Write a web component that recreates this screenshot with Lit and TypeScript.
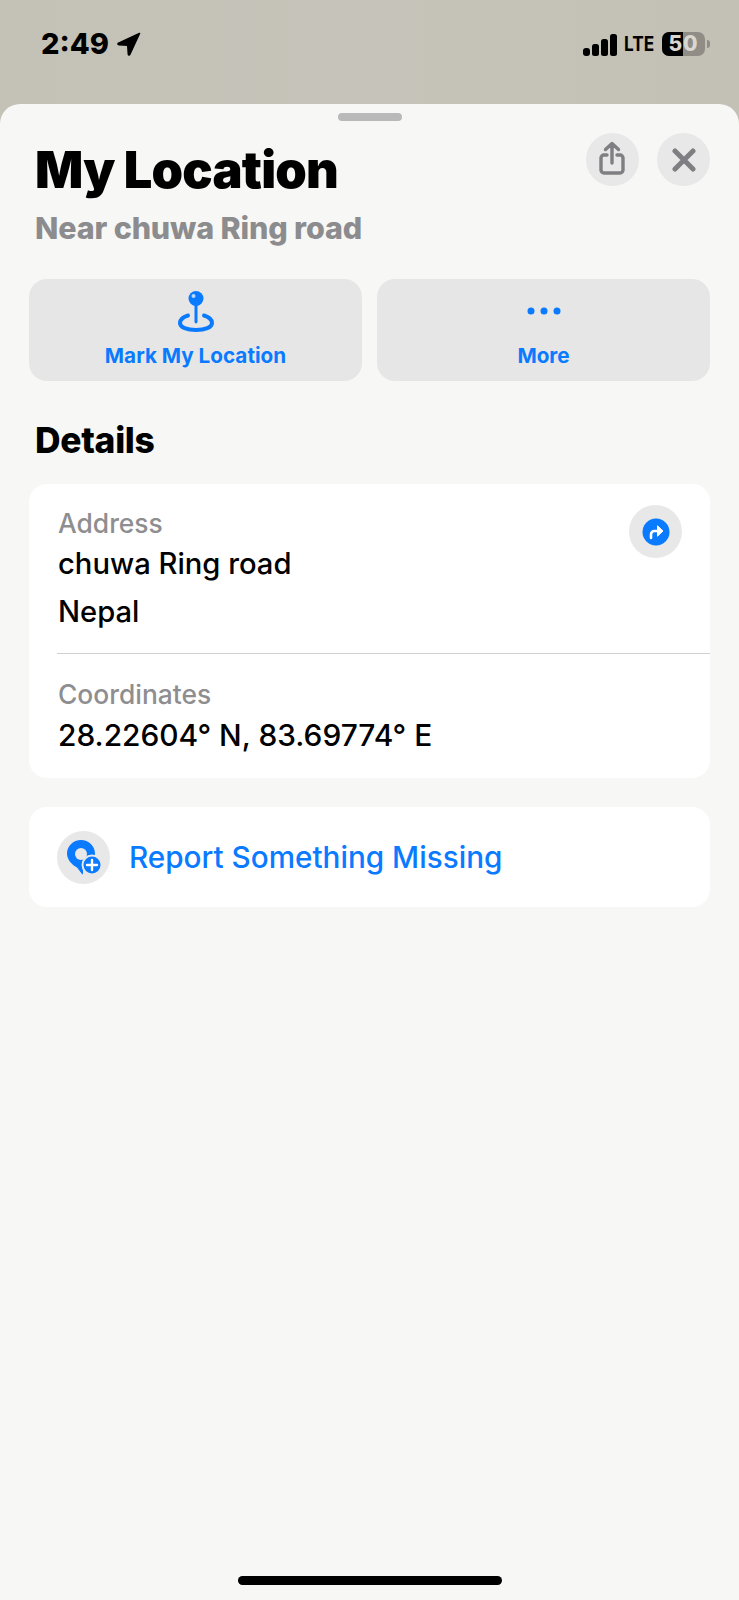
import { html, LitElement, css } from 'lit';
import { customElement } from 'lit/decorators.js';

@customElement('app-root')
export default class AppRoot extends LitElement {
  static styles = css`
    :host {
      display: block;
      width: 739px;
      height: 1600px;
      overflow: hidden;
      background: linear-gradient(90deg, #c4c1b7, #c6c3ba 50%, #c3c0b5);
      font-family: Inter, "Liberation Sans", sans-serif;
      color: #000;
    }
    .status {
      height: 104px;
      box-sizing: border-box;
      padding: 28px 29px 0 41px;
      display: flex;
      justify-content: space-between;
      align-items: flex-start;
    }
    .time {
      display: flex;
      align-items: center;
      gap: 8px;
      font-size: 29px;
      font-weight: 800;
      line-height: 32px;
    }
    .time svg { display: block; }
    .right {
      display: flex;
      align-items: center;
      gap: 5px;
      height: 32px;
    }
    .bars { margin: 2px 2px 0 0; }
    .lte {
      font-size: 20px;
      font-weight: 700;
      line-height: 24px;
      transform: scaleX(0.86);
      transform-origin: left center;
      width: 33px;
    }
    .batt {
      position: relative;
      width: 43px;
      height: 24px;
      border-radius: 7px;
      overflow: hidden;
      background: #8f8d86;
      font-size: 21px;
      font-weight: 800;
      line-height: 24px;
      text-align: center;
      color: #d9d7d0;
      letter-spacing: 1px;
    }
    .batt i {
      position: absolute;
      left: 0;
      top: 0;
      bottom: 0;
      width: 21px;
      background: #000;
    }
    .batt span { position: relative; }
    .nub {
      width: 3px;
      height: 8px;
      margin-left: -3px;
      background: #8f8d86;
      border-radius: 0 3px 3px 0;
    }
    .sheet {
      height: 1496px;
      box-sizing: border-box;
      background: #f7f7f5;
      border-radius: 20px 20px 0 0;
      padding: 9px 29px 0;
      display: flex;
      flex-direction: column;
      position: relative;
    }
    .handle {
      width: 64px;
      height: 8px;
      border-radius: 4px;
      background: #b9b9b9;
      align-self: center;
    }
    .head {
      display: flex;
      justify-content: space-between;
      align-items: flex-start;
      padding: 0 0 0 6px;
      margin-top: 9px;
    }
    .titles { padding-top: 11px; }
    h1 {
      margin: 0;
      font-size: 50.5px;
      line-height: 58px;
      font-weight: 900;
      letter-spacing: -0.8px;
    }
    .sub {
      margin-top: 11px;
      font-size: 30.5px;
      line-height: 36px;
      font-weight: 800;
      color: #8c8c8e;
      letter-spacing: -0.15px;
    }
    .head-btns {
      display: flex;
      gap: 18px;
      margin-top: 3px;
    }
    .round {
      width: 53px;
      height: 53px;
      border-radius: 50%;
      background: #e8e8e8;
      display: flex;
      align-items: center;
      justify-content: center;
    }
    .share svg { margin: -2px 2px 0 0; }
    .actions {
      display: grid;
      grid-template-columns: 333px 333px;
      gap: 15px;
      margin-top: 33px;
    }
    .action {
      height: 102px;
      border-radius: 18px;
      background: #e6e6e6;
      display: flex;
      flex-direction: column;
      align-items: center;
      color: #0a7aff;
      font-size: 20.7px;
      font-weight: 700;
    }
    .action .ic {
      height: 44px;
      margin-top: 10px;
      display: flex;
      align-items: center;
    }
    .action .lbl { margin-top: 11px; line-height: 24px; }
    h2 {
      margin: 40px 0 0 6px;
      font-size: 35.4px;
      line-height: 40px;
      font-weight: 800;
      letter-spacing: -0.3px;
    }
    .card {
      background: #fff;
      border-radius: 18px;
      margin-top: 23px;
    }
    .row {
      padding: 0 0 0 29px;
      position: relative;
      box-sizing: border-box;
    }
    .row.addr { padding-top: 23px; height: 169px; }
    .row.coord { padding-top: 23px; height: 124px; }
    .label {
      font-size: 26.4px;
      line-height: 33px;
      color: #8e8e90;
      font-weight: 500;
    }
    .coord .label { line-height: 34px; }
    .val {
      font-size: 29.2px;
      line-height: 47px;
      font-weight: 550;
    }
    .val + .val { margin-top: 1px; }
    .coord .val { font-size: 29.9px; line-height: 48px; }
    .go {
      position: absolute;
      right: 28px;
      top: 21px;
    }
    .sep { height: 1px; background: #d0d0d0; margin-left: 28px; }
    .report {
      display: flex;
      align-items: center;
      gap: 18px;
      height: 100px;
      margin-top: 29px;
      padding-left: 28px;
      color: #0a7aff;
      font-size: 29.7px;
      font-weight: 500;
    }
    .report .txt { margin-left: 1px; }
    .home {
      position: absolute;
      left: 238px;
      top: 1472px;
      width: 264px;
      height: 9px;
      border-radius: 5px;
      background: #000;
    }
  `;

  render() {
    return html`
      <div class="status">
        <div class="time">2:49
          <svg width="24" height="24" viewBox="0 0 24 24"><path d="M22.5 1.5 1.5 11.2c-.9.5-.6 1.500.3 1.500l8.900.6.6 8.900c0 .9 1.100 1.200 1.500.3z" fill="#000" stroke="#000" stroke-width="1.500" stroke-linejoin="round"/></svg>
        </div>
        <div class="right">
          <svg class="bars" width="34" height="22" viewBox="0 0 34 22" fill="#000"><rect x="0" y="14" width="7" height="8" rx="3"/><rect x="9" y="10" width="7" height="12" rx="2.5"/><rect x="18" y="5" width="7" height="17" rx="2.5"/><rect x="27" y="0" width="7" height="22" rx="2.5"/></svg>
          <div class="lte">LTE</div>
          <div class="batt"><i></i><span>50</span></div>
          <div class="nub"></div>
        </div>
      </div>
      <div class="sheet">
        <div class="handle"></div>
        <div class="head">
          <div class="titles">
            <h1>My Location</h1>
            <div class="sub">Near chuwa Ring road</div>
          </div>
          <div class="head-btns">
            <div class="round share">
              <svg width="28" height="36" viewBox="0 0 28 36" fill="none" stroke="#7f7f83" stroke-width="3.4" stroke-linecap="round" stroke-linejoin="round"><path d="M14 3v19M7.500 8.500 14 2.500l6.500 6M9 14H6a3 3 0 0 0-3 3v12a3 3 0 0 0 3 3h16a3 3 0 0 0 3-3V17a3 3 0 0 0-3-3h-3"/></svg>
            </div>
            <div class="round">
              <svg width="24" height="24" viewBox="0 0 24 24" stroke="#7f7f83" stroke-width="5" stroke-linecap="round"><path d="M3 3l18 18M21 3 3 21"/></svg>
            </div>
          </div>
        </div>
        <div class="actions">
          <div class="action">
            <div class="ic">
              <svg width="38" height="42" viewBox="0 0 38 42" fill="none"><path d="M11 25.500C6 27 3 29.500 3 33c0 4.500 7 7 16 7s16-2.500 16-7c0-3.500-3-6-8-7.500" stroke="#0a7aff" stroke-width="4" stroke-linecap="round"/><circle cx="19" cy="8.500" r="7.500" fill="#0a7aff"/><circle cx="16.500" cy="6" r="2" fill="#bcd9ff"/><path d="M17.500 14h3v17.500q0 2-1.500 2t-1.500-2z" fill="#0a7aff"/></svg>
            </div>
            <div class="lbl">Mark My Location</div>
          </div>
          <div class="action">
            <div class="ic">
              <svg width="34" height="8" viewBox="0 0 34 8" fill="#0a7aff"><circle cx="4" cy="4" r="3.500"/><circle cx="17" cy="4" r="3.500"/><circle cx="30" cy="4" r="3.500"/></svg>
            </div>
            <div class="lbl">More</div>
          </div>
        </div>
        <h2>Details</h2>
        <div class="card">
          <div class="row addr">
            <div class="label">Address</div>
            <div class="val">chuwa Ring road</div>
            <div class="val">Nepal</div>
            <div class="round go">
              <svg width="28" height="28" viewBox="0 0 28 28"><circle cx="14" cy="14" r="13.500" fill="#0a7aff"/><path d="M9 20v-3.500a3.500 3.500 0 0 1 3.500-3.500H19" fill="none" stroke="#fff" stroke-width="2.600" stroke-linecap="round"/><path d="M15.500 7.800 21 13l-5.500 5.200z" fill="#fff" stroke="#fff" stroke-linejoin="round"/></svg>
            </div>
          </div>
          <div class="sep"></div>
          <div class="row coord">
            <div class="label">Coordinates</div>
            <div class="val">28.22604° N, 83.69774° E</div>
          </div>
        </div>
        <div class="card report">
          <div class="round">
            <svg width="36" height="36" viewBox="0 0 36 36"><path d="M15 1C7.300 1 1 7 1 14.500c0 6 4.500 11 10 14l5 6.500c.5.700 1 .5 1-.3v-6c7-1.500 12-7.500 12-14.200C29 7 22.700 1 15 1z" fill="#0a7aff"/><circle cx="15" cy="15" r="6" fill="#e8e8e8"/><circle cx="26" cy="26" r="9.500" fill="#0a7aff" stroke="#e8e8e8" stroke-width="2"/><path d="M26 21v10M21 26h10" stroke="#fff" stroke-width="2.400" stroke-linecap="round"/></svg>
          </div>
          <div class="txt">Report Something Missing</div>
        </div>
        <div class="home"></div>
      </div>
    `;
  }
}
